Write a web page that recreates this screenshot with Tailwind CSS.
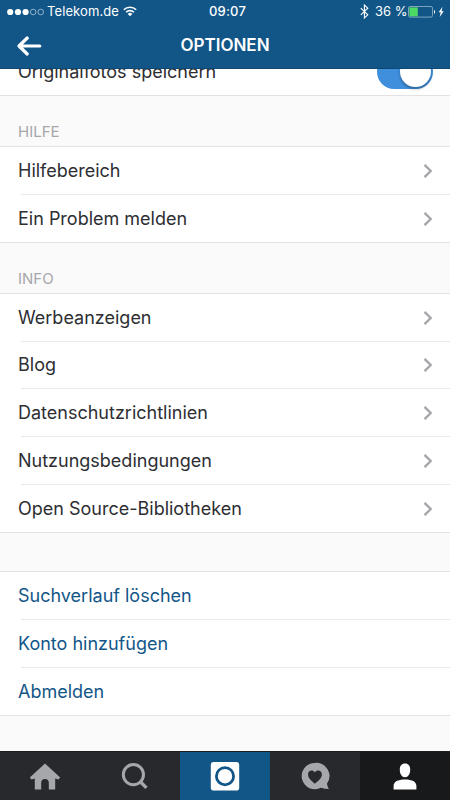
<!DOCTYPE html>
<html lang="de">
<head>
<meta charset="utf-8">
<title>Optionen</title>
<script src="https://cdn.jsdelivr.net/npm/@tailwindcss/browser@4"></script>
</head>
<body class="w-[450px] h-[800px] overflow-hidden bg-[#fafafa] font-['Inter','Liberation_Sans',sans-serif] text-[#2d2e32] flex flex-col">
<svg class="hidden"><symbol id="chev" viewBox="0 0 10 16"><path d="M1.5 1.8 7.7 8 1.5 14.2" fill="none" stroke="#a6a7aa" stroke-width="2.4"/></symbol></svg>

<header class="h-[69px] shrink-0 bg-[#125688] text-white border-b border-[#0f4973] z-10">
  <div class="h-[23px] grid grid-cols-3 items-center text-[13px]">
    <div class="flex items-center pl-[7px]">
      <svg class="w-[38px] h-[8px]" viewBox="0 0 38 8"><g fill="#fff"><circle cx="3.2" cy="4" r="3.1"/><circle cx="11" cy="4" r="3.1"/><circle cx="18.6" cy="4" r="3.1"/></g><g fill="none" stroke="#fff" stroke-opacity=".65" stroke-width=".8"><circle cx="26.2" cy="4" r="2.8"/><circle cx="33.7" cy="4" r="2.8"/></g></svg>
      <span class="ml-[2px] w-[76px] whitespace-nowrap tracking-[0.1px]">Telekom.de</span>
      <svg class="w-[14px] h-[11px] -mt-px" viewBox="0 0 14 11"><g fill="none" stroke="#fff" stroke-width="1.6"><path d="M.8 3.8a8.8 8.8 0 0 1 12.4 0"/><path d="M3.1 6.2a5.6 5.6 0 0 1 7.8 0"/></g><path d="M4.7 7.9a3.2 3.2 0 0 1 4.6 0L7 10.3z" fill="#fff"/></svg>
    </div>
    <div class="text-center font-medium pl-[5px] tracking-[0.2px]">09:07</div>
    <div class="flex items-center pl-[60px]">
      <svg class="w-[9px] h-[15px]" viewBox="0 0 9 15"><path d="M.8 4.2 7.8 10.8 4.4 14V1l3.4 3.2L.8 10.8" fill="none" stroke="#fff" stroke-width="1.1"/></svg>
      <span class="ml-[6px] w-[33px] whitespace-nowrap">36 %</span>
      <svg class="w-[37px] h-[12px]" viewBox="0 0 37 12"><rect x=".5" y=".5" width="24" height="10.6" rx="1.5" fill="none" stroke="#7fa3bf"/><path d="M1.4 1.4h8.4v8.9H1.4z" fill="#4cd964"/><path d="M26 4c1.5.3 1.5 3.5 0 3.8z" fill="#fff"/><path d="m34.5.8-3.8 5.5h2l-1 4.7 4-5.8h-2.1z" fill="#fff"/></svg>
    </div>
  </div>
  <div class="h-[45px] grid grid-cols-[60px_1fr_60px] items-center">
    <svg class="ml-[17px] w-[25px] h-[20px]" viewBox="0 0 25 20"><path d="M2.2 10h20.6M10.2 2 2 10l8.2 8" fill="none" stroke="#fff" stroke-width="3.2" stroke-linecap="round" stroke-linejoin="round"/></svg>
    <h1 class="text-center text-[17px] font-semibold leading-none">OPTIONEN</h1>
  </div>
</header>

<main class="flex-1 overflow-hidden text-[18px] leading-none">
  <div class="h-[27px] bg-white border-b border-[#e1e2e3] relative overflow-hidden">
    <span class="absolute left-[18px] bottom-[14px]">Originalfotos speichern</span>
    <div class="absolute left-[377px] bottom-[6px] w-[56px] h-[34px] rounded-full bg-[#3f8fdc]"><div class="absolute right-[2px] top-[1px] size-[31px] rounded-full bg-white shadow-[0_2px_3px_rgba(0,0,0,0.3)]"></div></div>
  </div>

  <h2 class="h-[51px] border-b border-[#e1e2e3] pl-[18px] pt-[28px] text-[15px] leading-none text-[#a6a7aa]">HILFE</h2>
  <ul class="bg-white">
    <li class="h-[48px] flex items-stretch"><span class="w-[21px] shrink-0"></span><div class="flex-1 flex items-center justify-between border-b border-[#e8e9ea] pr-[17px]"><span class="-ml-[3px]">Hilfebereich</span><svg class="w-[10px] h-[16px]"><use href="#chev"/></svg></div></li>
    <li class="h-[48px] flex items-center justify-between border-b border-[#e1e2e3] pl-[18px] pr-[17px]"><span>Ein Problem melden</span><svg class="w-[10px] h-[16px]"><use href="#chev"/></svg></li>
  </ul>

  <h2 class="h-[51px] border-b border-[#e1e2e3] pl-[18px] pt-[28px] text-[15px] leading-none text-[#a6a7aa]">INFO</h2>
  <ul class="bg-white">
    <li class="h-[48px] flex items-stretch"><span class="w-[21px] shrink-0"></span><div class="flex-1 flex items-center justify-between border-b border-[#e8e9ea] pr-[17px]"><span class="-ml-[3px]">Werbeanzeigen</span><svg class="w-[10px] h-[16px]"><use href="#chev"/></svg></div></li>
    <li class="h-[47px] flex items-stretch"><span class="w-[21px] shrink-0"></span><div class="flex-1 flex items-center justify-between border-b border-[#e8e9ea] pr-[17px]"><span class="-ml-[3px]">Blog</span><svg class="w-[10px] h-[16px]"><use href="#chev"/></svg></div></li>
    <li class="h-[48px] flex items-stretch"><span class="w-[21px] shrink-0"></span><div class="flex-1 flex items-center justify-between border-b border-[#e8e9ea] pr-[17px]"><span class="-ml-[3px]">Datenschutzrichtlinien</span><svg class="w-[10px] h-[16px]"><use href="#chev"/></svg></div></li>
    <li class="h-[48px] flex items-stretch"><span class="w-[21px] shrink-0"></span><div class="flex-1 flex items-center justify-between border-b border-[#e8e9ea] pr-[17px]"><span class="-ml-[3px]">Nutzungsbedingungen</span><svg class="w-[10px] h-[16px]"><use href="#chev"/></svg></div></li>
    <li class="h-[48px] flex items-center justify-between border-b border-[#e1e2e3] pl-[18px] pr-[17px]"><span>Open Source-Bibliotheken</span><svg class="w-[10px] h-[16px]"><use href="#chev"/></svg></li>
  </ul>

  <div class="h-[39px] border-b border-[#e1e2e3]"></div>
  <ul class="bg-white text-[#125688]">
    <li class="h-[48px] flex items-stretch pl-[21px]"><div class="flex-1 flex items-center border-b border-[#e8e9ea]"><span class="-ml-[3px]">Suchverlauf löschen</span></div></li>
    <li class="h-[48px] flex items-stretch pl-[21px]"><div class="flex-1 flex items-center border-b border-[#e8e9ea]"><span class="-ml-[3px]">Konto hinzufügen</span></div></li>
    <li class="h-[48px] flex items-center border-b border-[#e1e2e3] pl-[18px]">Abmelden</li>
  </ul>
</main>

<nav class="h-[49px] shrink-0 grid grid-cols-5 bg-[#27292d] border-t border-[#1c1d20]">
  <a class="flex items-center justify-center"><svg class="w-[32px] h-[28px]" viewBox="0 0 32 28"><path d="M16 1.5 31.2 15.6 29.5 17.5 26.2 16.6V27.4H19.8V20.8a3.8 3.8 0 0 0-7.6 0V27.4H5.8V16.6L2.5 17.5.8 15.6z" fill="#a6a7aa"/></svg></a>
  <a class="flex items-center justify-center"><svg class="w-[28px] h-[28px]" viewBox="0 0 28 28"><circle cx="12.4" cy="12.6" r="10.1" fill="none" stroke="#a6a7aa" stroke-width="3"/><path d="m19.3 19.7 6.2 6.2" stroke="#a6a7aa" stroke-width="3.4"/></svg></a>
  <a class="flex items-center justify-center bg-[#125688]"><svg class="w-[30px] h-[30px]" viewBox="0 0 30 30"><rect x=".8" y=".9" width="28.4" height="28.6" rx="2.8" fill="#fff"/><circle cx="15" cy="15.2" r="8.6" fill="none" stroke="#125688" stroke-width="2.8"/></svg></a>
  <a class="flex items-center justify-center"><svg class="w-[30px] h-[28px]" viewBox="0 0 30 28"><path d="M14.8.9a13.2 13.2 0 1 0 6.2 24.9c2.5.8 5.2 1.2 8 1.3-1.2-1.6-1.8-3.6-2-5.5A13.2 13.2 0 0 0 14.8.9z" fill="#a6a7aa"/><path d="M14.8 21.7C10.5 18.3 8 15.8 8 12.5 8 8.2 12.7 7.2 14.8 10.5 16.9 7.2 21.9 8.2 21.9 12.5c0 3.3-2.8 5.8-7.1 9.2z" fill="#27292d"/></svg></a>
  <a class="flex items-center justify-center bg-[#18191b]"><svg class="w-[24px] h-[28px]" viewBox="0 0 24 28"><path d="M12 1.5c3.4 0 5.2 2.3 5.2 6.2 0 4.3-2 7.5-5.2 7.5s-5.2-3.2-5.2-7.5c0-3.9 1.8-6.2 5.2-6.2zM.6 27.4v-3.6c0-4.2 4.2-6.4 11.4-6.4s11.4 2.2 11.4 6.4v3.6z" fill="#fff"/></svg></a>
</nav>
</body>
</html>
